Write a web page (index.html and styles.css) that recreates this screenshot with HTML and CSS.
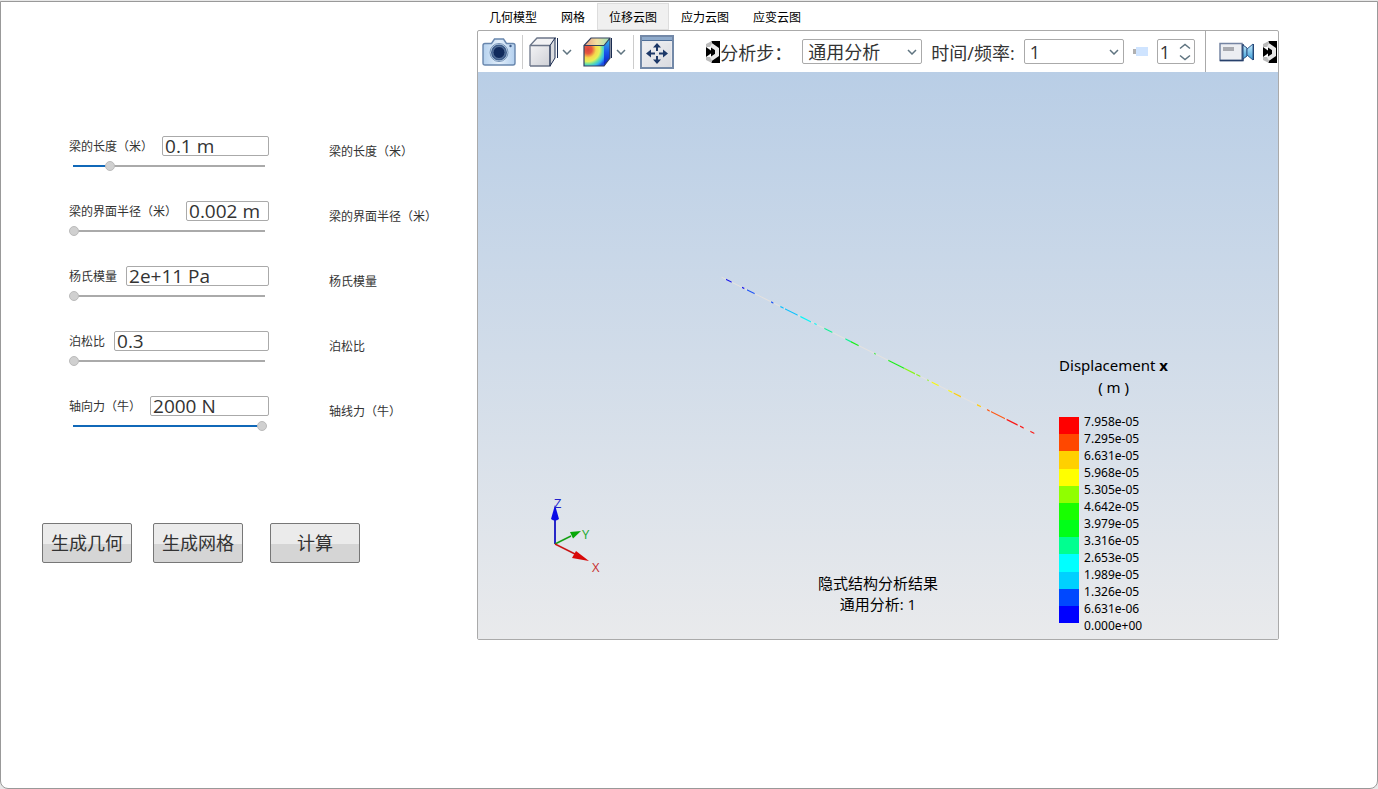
FILE: index.html
```html
<!DOCTYPE html>
<html lang="zh-CN">
<head>
<meta charset="utf-8">
<title>梁结构分析</title>
<link rel="stylesheet" href="styles.css">
</head>
<body>
<svg class="defs" width="0" height="0" aria-hidden="true">
  <defs>
    <linearGradient id="blueBody" x1="0" y1="0" x2="1" y2="0"><stop offset="0" stop-color="#b5d1ee"/><stop offset=".5" stop-color="#e3effb"/><stop offset="1" stop-color="#b3d0ef"/></linearGradient>
    <linearGradient id="greyFace" x1="0" y1="0" x2="1" y2="1"><stop offset="0" stop-color="#f3f3f5"/><stop offset="1" stop-color="#cfd0d6"/></linearGradient>
    <radialGradient id="contour" cx=".2" cy=".2" r="1"><stop offset="0" stop-color="#d9423c"/><stop offset=".2" stop-color="#e8593f"/><stop offset=".4" stop-color="#f6d84c"/><stop offset=".58" stop-color="#e6f05a"/><stop offset=".72" stop-color="#63dfa8"/><stop offset=".85" stop-color="#32b4f2"/><stop offset="1" stop-color="#1c4fe0"/></radialGradient>
    <linearGradient id="contourTop" x1="0" y1="0" x2="1" y2="0"><stop offset="0" stop-color="#e89a80"/><stop offset=".5" stop-color="#f3e0a0"/><stop offset="1" stop-color="#9be3b8"/></linearGradient>
    <linearGradient id="contourSide" x1="0" y1="0" x2="0" y2="1"><stop offset="0" stop-color="#35c4e8"/><stop offset=".5" stop-color="#1a56ea"/><stop offset="1" stop-color="#0a1cc0"/></linearGradient>
    <linearGradient id="lens" x1="0" y1="0" x2="0" y2="1"><stop offset="0" stop-color="#c8ecfc"/><stop offset="1" stop-color="#3c9ed8"/></linearGradient>
    <filter id="soften"><feGaussianBlur stdDeviation=".7"/></filter>
    <symbol id="chevron" viewBox="0 0 10 6"><path d="M1 1l4 4 4-4" fill="none" stroke="#5f7480" stroke-width="1.5"/></symbol>
    <symbol id="marker" viewBox="0 0 14 22">
      <path d="M5 0h9v22H5z" fill="#000"/>
      <g filter="url(#soften)">
        <path d="M0 3l6-3v6H0zM0 19l6 3v-6H0z" fill="#bbb"/>
        <path d="M5 4l6 4v6l-6 4" fill="none" stroke="#e8e8e8" stroke-width="4"/>
        <path d="M0 6l7 5-7 5z" fill="#000"/>
      </g>
    </symbol>
  </defs>
</svg>

<main class="window">
  <section class="side">
    <form class="params">
      <div class="field">
        <label for="len">梁的长度（米）</label><input class="value" id="len" type="text" value="0.1 m">
        <input class="slider" type="range" min="0" max="100" value="19" aria-label="梁的长度" style="--fill:36px">
      </div>
      <span class="note">梁的长度（米）</span>
      <div class="field">
        <label for="rad">梁的界面半径（米）</label><input class="value" id="rad" type="text" value="0.002 m">
        <input class="slider" type="range" min="0" max="100" value="0" aria-label="梁的界面半径" style="--fill:0px">
      </div>
      <span class="note">梁的界面半径（米）</span>
      <div class="field">
        <label for="young">杨氏模量</label><input class="value" id="young" type="text" value="2e+11 Pa">
        <input class="slider" type="range" min="0" max="100" value="0" aria-label="杨氏模量" style="--fill:0px">
      </div>
      <span class="note">杨氏模量</span>
      <div class="field">
        <label for="poisson">泊松比</label><input class="value" id="poisson" type="text" value="0.3">
        <input class="slider" type="range" min="0" max="100" value="0" aria-label="泊松比" style="--fill:0px">
      </div>
      <span class="note">泊松比</span>
      <div class="field">
        <label for="force">轴向力（牛）</label><input class="value" id="force" type="text" value="2000 N">
        <input class="slider" type="range" min="0" max="100" value="100" aria-label="轴向力" style="--fill:188px">
      </div>
      <span class="note">轴线力（牛）</span>
    </form>
    <div class="actions">
      <div class="generate">
        <button class="action" type="button">生成几何</button>
        <button class="action" type="button">生成网格</button>
      </div>
      <button class="action" type="button">计算</button>
    </div>
  </section>

  <section class="viewer">
    <nav class="tabs" role="tablist">
      <button class="tab" role="tab" type="button">几何模型</button>
      <button class="tab" role="tab" type="button">网格</button>
      <button class="tab active" role="tab" type="button" aria-selected="true">位移云图</button>
      <button class="tab" role="tab" type="button">应力云图</button>
      <button class="tab" role="tab" type="button">应变云图</button>
    </nav>
    <div class="panel">
      <div class="toolbar">
        <div class="tools">
          <button class="tool" type="button" aria-label="截图">
            <svg width="34" height="30" viewBox="0 0 34 30"><path d="M3 6.500h6.500L12.500 2h9l3 4.500H31q2 0 2 2V26q0 2-2 2H3q-2 0-2-2V8.500q0-2 2-2z" fill="url(#blueBody)" stroke="#6886ad" stroke-width="1.400"/><circle cx="17" cy="15.500" r="9" fill="#d9e9f8" stroke="#7190b5" stroke-width="1"/><circle cx="17" cy="15.500" r="7" fill="#16305f" stroke="#3d5c8a" stroke-width="2"/><circle cx="17" cy="15.500" r="6" fill="#102a5c" stroke="#8aa4c4" stroke-width=".6"/><circle cx="28.500" cy="9" r="1.200" fill="#3c5a88"/></svg>
          </button>
          <span class="rule"></span>
          <button class="tool drop" type="button" aria-label="显示模式">
            <svg width="30" height="30" viewBox="0 0 30 30"><path d="M1 8.500L8 1h19l-6 7.500z" fill="#f2f2f4"/><path d="M21 8.500L26 1v20l-5 8z" fill="#dcdde0"/><path d="M1 8.500h20V29H1z" fill="url(#greyFace)"/><path d="M1 29V8.500L8 1h19M1 8.500h20V29H1" fill="none" stroke="#6c7689" stroke-width="1.300"/><path d="M21 29V8.500L26 1v20l-5 8M28.500 1v20" fill="none" stroke="#1b2c50" stroke-width="1"/></svg>
            <svg width="10" height="6"><use href="#chevron"/></svg>
          </button>
          <button class="tool drop" type="button" aria-label="云图模式">
            <svg width="30" height="30" viewBox="0 0 30 30"><path d="M1 8.500L8 1h19l-6 7.500z" fill="url(#contourTop)"/><path d="M21 8.500L27 1v20l-6 8z" fill="url(#contourSide)"/><path d="M1 8.500h20V29H1z" fill="url(#contour)"/><path d="M1 29V8.500L8 1h19v20l-6 8zM1 8.500h20M21 8.500L27 1" fill="none" stroke="#33405e" stroke-width="1.200"/><path d="M28.500 1v20" stroke="#1b2c50" stroke-width="1"/></svg>
            <svg width="10" height="6"><use href="#chevron"/></svg>
          </button>
          <span class="rule"></span>
          <button class="tool" type="button" aria-label="适应窗口">
            <svg width="34" height="34" viewBox="0 0 34 34"><path d="M1 1h32v32H1z" fill="#e9eaee" stroke="#7389a8" stroke-width="2"/><path d="M2 2h30v3H2z" fill="#8fabcc"/><path d="M2 5.500h30" stroke="#4f6e98"/><path d="M3 8h28v24H3z" fill="url(#greyFace)" opacity=".6"/><path d="M17 8l4 4.500h-3V16h-2v-3.500h-3zM17 29l4-4.500h-3V21h-2v3.500h-3zM6 18.500l5-4v3h4v2h-4v3zM28 18.500l-5-4v3h-4v2h4v3z" fill="#1d3868"/></svg>
          </button>
        </div>
        <div class="query">
          <div class="pick step">
            <svg width="14" height="22"><use href="#marker"/></svg>
            <label for="step">分析步：</label>
          </div>
          <span class="combo wide"><select id="step"><option>通用分析</option></select><svg width="10" height="6"><use href="#chevron"/></svg></span>
          <label for="time">时间/频率:</label>
          <span class="combo"><select id="time"><option>1</option></select><svg width="10" height="6"><use href="#chevron"/></svg></span>
          <svg class="thumb" width="15" height="9" viewBox="0 0 15 9"><path d="M0 2h3v5H0z" fill="#b0b0b0"/><path d="M3 0h12v9H3z" fill="#cfe4ff"/></svg>
          <span class="spin"><input type="number" value="1" aria-label="帧"><svg width="12" height="18" viewBox="0 0 12 18"><path d="M1 5.500l5-4 5 4M1 12.500l5 4 5-4" fill="none" stroke="#5f7480" stroke-width="1.500"/></svg></span>
        </div>
        <div class="media">
          <button class="tool" type="button" aria-label="录制动画">
            <svg width="36" height="20" viewBox="0 0 36 20"><path d="M1 1.500h22v17H1z" fill="#eceef2" stroke="#7484a2" stroke-width="1.500"/><path d="M1 18.500h23V2" fill="none" stroke="#27406b" stroke-width="1.500"/><path d="M4 5h11v4H4z" fill="#a8aab0"/><path d="M24 3l4 3v8l-4 3z" fill="url(#lens)" stroke="#264a7d"/><path d="M28 7l6-5v16l-6-5z" fill="url(#lens)" stroke="#31598b"/><path d="M34.500 2v16" stroke="#244777"/></svg>
          </button>
          <svg width="14" height="22"><use href="#marker"/></svg>
        </div>
      </div>
      <div class="canvas">
        <svg class="scene" viewBox="478 72 800 567">
          <g transform="matrix(.3333 .1665 0 .3333 715 273.840)" fill="none" stroke-width="3">
            <path d="M20 0H958" stroke="#e6e2de"/>
            <g stroke-width="4">
              <path d="M33 0H50M81 0H88" stroke="#1a1aee"/>
              <path d="M96 0H119M168 0H175" stroke="#1e56f8"/>
              <path d="M196 0H206M210 0H248" stroke="#10c0ff"/>
              <path d="M256 0H288M298 0H305" stroke="#08f4f8"/>
              <path d="M328 0H352M391 0H408" stroke="#10f098"/>
              <path d="M408 0H431M478 0H482M520 0H568" stroke="#18ee1c"/>
              <path d="M568 0H600M604 0H616M637 0H641" stroke="#85f418"/>
              <path d="M650 0H671M700 0H712" stroke="#f6f810"/>
              <path d="M716 0H738M786 0H798" stroke="#fccc10"/>
              <path d="M816 0H824M828 0H870" stroke="#fc5818"/>
              <path d="M875 0H908M915 0H926M946 0H958" stroke="#f81818"/>
            </g>
          </g>
          <path d="M555 544V518" stroke="#2828c8" stroke-width="2"/><path d="M555 505l4 14q-4 3-8 0z" fill="#0a0ae6"/>
          <path d="M555 544l16-8" stroke="#14a014" stroke-width="1.500"/><path d="M581 531l-11 1 3 6.500z" fill="#08a808"/>
          <path d="M555 544l20 10" stroke="#c81414" stroke-width="1.500"/><path d="M589 561l-13-10-4 7z" fill="#d80808"/>
          <g class="axes"><text x="554" y="508" fill="#2222cc">Z</text><text x="582" y="539" fill="#22aa33">Y</text><text x="592" y="572" fill="#c83232">X</text></g>
        </svg>
        <div class="caption">隐式结构分析结果<br>通用分析: 1</div>
        <div class="legend">
          <div class="legend-title">Displacement <b>x</b><br>( m )</div>
          <div class="scale">
            <div class="bar"><i class="c1"></i><i class="c2"></i><i class="c3"></i><i class="c4"></i><i class="c5"></i><i class="c6"></i><i class="c7"></i><i class="c8"></i><i class="c9"></i><i class="c10"></i><i class="c11"></i><i class="c12"></i></div>
            <ol class="levels"><li>7.958e-05</li><li>7.295e-05</li><li>6.631e-05</li><li>5.968e-05</li><li>5.305e-05</li><li>4.642e-05</li><li>3.979e-05</li><li>3.316e-05</li><li>2.653e-05</li><li>1.989e-05</li><li>1.326e-05</li><li>6.631e-06</li><li>0.000e+00</li></ol>
          </div>
        </div>
      </div>
    </div>
  </section>
</main>
</body>
</html>
```

FILE: styles.css
```css
* { box-sizing: border-box; }
body {
  margin: 0;
  padding-top: 1px;
  min-height: 100vh;
  display: flex;
  background: #e8e8e8;
  color: #333;
  font-family: "Open Sans", "Noto Sans CJK SC", sans-serif;
  font-size: 12px;
}
button, input, select { font: inherit; color: inherit; margin: 0; }
button { padding: 0; border: 0; background: none; }
svg { display: block; flex: none; }
.defs { position: absolute; }

.window {
  flex: 1;
  display: flex;
  align-items: flex-start;
  padding-right: 98px;
  background: #fff;
  border: 1px solid #999;
  border-radius: 0 0 8px 8px;
}
.side { flex: none; width: 476px; padding: 134px 0 0 41px; }
.params {
  display: grid;
  grid-template-columns: 200px 1fr;
  column-gap: 60px;
  row-gap: 30px;
  padding-left: 27px;
}
.field { display: flex; flex-wrap: wrap; align-items: flex-start; row-gap: 5px; height: 35px; }
.field label { height: 20px; margin-right: 9px; line-height: 22px; }
.value {
  flex: 1;
  min-width: 0;
  width: 0;
  height: 20px;
  padding: 0 2px;
  border: 1px solid #aaa;
  border-radius: 2px;
  background: #fff;
  font-size: 19px;
  line-height: 18px;
}
.slider {
  appearance: none;
  width: 198px;
  height: 10px;
  background:
    linear-gradient(#1068b8, #1068b8) 4px 4px / var(--fill) 2px no-repeat,
    linear-gradient(#aaa, #aaa) 4px 4px / 192px 2px no-repeat;
}
.slider::-webkit-slider-thumb {
  appearance: none;
  width: 10px;
  height: 10px;
  border: 1px solid #bbb;
  border-radius: 50%;
  background: #d0d0d0;
}
.note { line-height: 32px; }

.actions { display: flex; gap: 27px; margin-top: 92px; }
.generate { display: flex; gap: 21px; }
.action {
  width: 90px;
  height: 40px;
  padding-bottom: 2px;
  border: 1px solid #777;
  border-radius: 2px;
  background: linear-gradient(#ebebeb 52%, #d5d5d5 52%);
  font-size: 18px;
}

.viewer { flex: 1; min-width: 0; }
.tabs { display: flex; height: 28px; padding-top: 1px; color: #000; }
.tab { padding: 0 12px; border: 1px solid transparent; border-width: 1px 0; }
.tab.active { background: #f0f0f0; border: 1px solid #ddd; padding: 0 11px; }

.panel { border: 1px solid #aaa; border-radius: 2px; overflow: hidden; }
.toolbar { display: flex; justify-content: space-between; height: 41px; font-size: 18px; }
.toolbar label { white-space: nowrap; }
.tools { display: flex; align-items: center; gap: 6px; padding-left: 4px; }
.rule { width: 1px; height: 34px; background: #ccc; }
.tool { display: flex; align-items: center; }
.drop { gap: 3px; margin-right: 5px; }
.drop + .drop { margin-right: 1px; }
.query { display: flex; align-items: center; gap: 9px; padding-left: 22px; }
.pick { display: flex; align-items: center; }
.step { width: 87px; }
.combo, .spin { display: grid; align-items: center; width: 100px; }
.combo > *, .spin > * { grid-area: 1 / 1; }
.wide { width: 120px; }
.combo svg { justify-self: end; margin-right: 5px; pointer-events: none; }
.combo select, .spin input {
  appearance: none;
  width: 100%;
  height: 25px;
  padding: 0 5px;
  border: 1px solid #aaa;
  border-radius: 2px;
  background: #fff;
}
.spin { width: 38px; }
.spin input { padding: 0 2px; appearance: textfield; }
.spin input::-webkit-inner-spin-button { appearance: none; }
.spin svg { justify-self: end; margin-right: 4px; pointer-events: none; }
.media { display: flex; align-items: center; gap: 8px; padding: 0 1px 0 13px; border-left: 1px solid #aaa; }

.canvas { position: relative; background: linear-gradient(#b9cee6, #e9eaec); color: #000; }
.scene { width: 100%; height: auto; }
.axes { font-size: 13px; }
.caption {
  position: absolute;
  left: 0;
  right: 0;
  bottom: 24px;
  text-align: center;
  font-size: 15px;
  line-height: 21px;
}
.legend { position: absolute; right: 110px; bottom: 5px; }
.legend-title { font-size: 15px; line-height: 22px; text-align: center; font-family: "Noto Sans", sans-serif; }
.scale { display: flex; gap: 5px; margin-top: 15px; }
.bar { display: flex; flex-direction: column; width: 20px; height: 206px; margin-top: 4px; }
.bar i { flex: 1; }
.c1 { background: #f00; }
.c2 { background: #ff4800; }
.c3 { background: #ffd000; }
.c4 { background: #ff0; }
.c5 { background: #90ff00; }
.c6 { background: #18ff00; }
.c7 { background: #00ff18; }
.c8 { background: #00ff90; }
.c9 { background: #0ff; }
.c10 { background: #00d0ff; }
.c11 { background: #0048ff; }
.c12 { background: #00f; }
.levels { margin: 0; padding: 0; list-style: none; line-height: 17px; font-family: "Noto Sans", sans-serif; }
```
